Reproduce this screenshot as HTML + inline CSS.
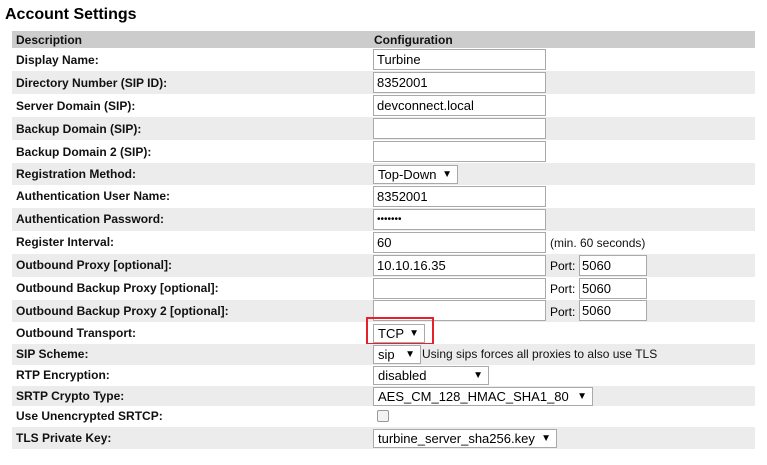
<!DOCTYPE html>
<html><head><style>
body{margin:0;background:#fff;font-family:"Liberation Sans",Arial,sans-serif;width:767px;height:465px;position:relative;overflow:hidden}
h1{position:absolute;left:5px;top:6px;margin:0;font-size:16px;font-weight:bold;color:#000}
.r{position:absolute;left:12px;width:743px}
.g{background:#ececec}
.h{background:#cccccc}
.l{position:absolute;left:4px;font-size:12px;font-weight:bold;color:#111}
.c{position:absolute;font-size:12px;color:#111}
.in{position:absolute;left:361px;width:170px;height:19px;border:1px solid #a9a9a9;background:#fff;font-size:13px;line-height:19px;padding-left:3px;box-sizing:border-box;width:173px;height:21px}
.sel{position:absolute;left:361px;height:19px;border:1px solid #a9a9a9;background:#fff;font-size:13px;line-height:18px;padding-left:4px;box-sizing:border-box}
.sel span{position:absolute;right:5px;top:0;font-size:10px}
.port{position:absolute;left:538px;font-size:12px}
.pin{position:absolute;left:567px;width:68px;height:21px;border:1px solid #a9a9a9;background:#fff;font-size:13px;line-height:19px;padding-left:2px;box-sizing:border-box}
</style></head><body>
<h1>Account Settings</h1>
<div class="r h" style="top:31px;height:17px"><div class="l" style="top:2px">Description</div><div class="l" style="left:362px;top:2px">Configuration</div></div>

<div class="r" style="top:48px;height:23px"><div class="l" style="top:5px">Display Name:</div><div class="in" style="top:1px">Turbine</div></div>
<div class="r g" style="top:71px;height:23px"><div class="l" style="top:5px">Directory Number (SIP ID):</div><div class="in" style="top:1px">8352001</div></div>
<div class="r" style="top:94px;height:23px"><div class="l" style="top:5px">Server Domain (SIP):</div><div class="in" style="top:1px">devconnect.local</div></div>
<div class="r g" style="top:117px;height:23px"><div class="l" style="top:5px">Backup Domain (SIP):</div><div class="in" style="top:1px"></div></div>
<div class="r" style="top:140px;height:23px"><div class="l" style="top:5px">Backup Domain 2 (SIP):</div><div class="in" style="top:1px"></div></div>
<div class="r g" style="top:163px;height:22px"><div class="l" style="top:4px">Registration Method:</div><div class="sel" style="top:2px;width:85px">Top-Down<span>▼</span></div></div>
<div class="r" style="top:185px;height:23px"><div class="l" style="top:4px">Authentication User Name:</div><div class="in" style="top:1px">8352001</div></div>
<div class="r g" style="top:208px;height:23px"><div class="l" style="top:4px">Authentication Password:</div><div class="in" style="top:1px;font-size:10px">•••••••</div></div>
<div class="r" style="top:231px;height:23px"><div class="l" style="top:4px">Register Interval:</div><div class="in" style="top:1px">60</div><div class="c" style="left:538px;top:5px">(min. 60 seconds)</div></div>
<div class="r g" style="top:254px;height:23px"><div class="l" style="top:4px">Outbound Proxy [optional]:</div><div class="in" style="top:1px">10.10.16.35</div><div class="port" style="top:5px">Port:</div><div class="pin" style="top:1px">5060</div></div>
<div class="r" style="top:277px;height:23px"><div class="l" style="top:4px">Outbound Backup Proxy [optional]:</div><div class="in" style="top:1px"></div><div class="port" style="top:5px">Port:</div><div class="pin" style="top:1px">5060</div></div>
<div class="r g" style="top:300px;height:22px"><div class="l" style="top:4px">Outbound Backup Proxy 2 [optional]:</div><div class="in" style="top:0px"></div><div class="port" style="top:5px">Port:</div><div class="pin" style="top:0px">5060</div></div>
<div class="r" style="top:322px;height:22px"><div class="l" style="top:4px">Outbound Transport:</div><div class="sel" style="top:2px;width:52px">TCP<span>▼</span></div></div>
<div style="position:absolute;left:366px;top:317px;width:68px;height:28px;border:2px solid #e8202a;box-sizing:border-box"></div>
<div class="r g" style="top:344px;height:21px"><div class="l" style="top:3px">SIP Scheme:</div><div class="sel" style="top:1px;width:48px">sip<span>▼</span></div><div class="c" style="left:410px;top:3px">Using sips forces all proxies to also use TLS</div></div>
<div class="r" style="top:365px;height:21px"><div class="l" style="top:3px">RTP Encryption:</div><div class="sel" style="top:1px;width:116px">disabled<span>▼</span></div></div>
<div class="r g" style="top:386px;height:20px"><div class="l" style="top:3px">SRTP Crypto Type:</div><div class="sel" style="top:1px;width:220px">AES_CM_128_HMAC_SHA1_80<span>▼</span></div></div>
<div class="r" style="top:406px;height:21px"><div class="l" style="top:3px">Use Unencrypted SRTCP:</div><div style="position:absolute;left:365px;top:4px;width:12px;height:12px;border:1px solid #999;border-radius:2px;background:#f3f3f3;box-sizing:border-box"></div></div>
<div class="r g" style="top:427px;height:22px"><div class="l" style="top:4px">TLS Private Key:</div><div class="sel" style="top:2px;width:184px">turbine_server_sha256.key<span>▼</span></div></div>
</body></html>
